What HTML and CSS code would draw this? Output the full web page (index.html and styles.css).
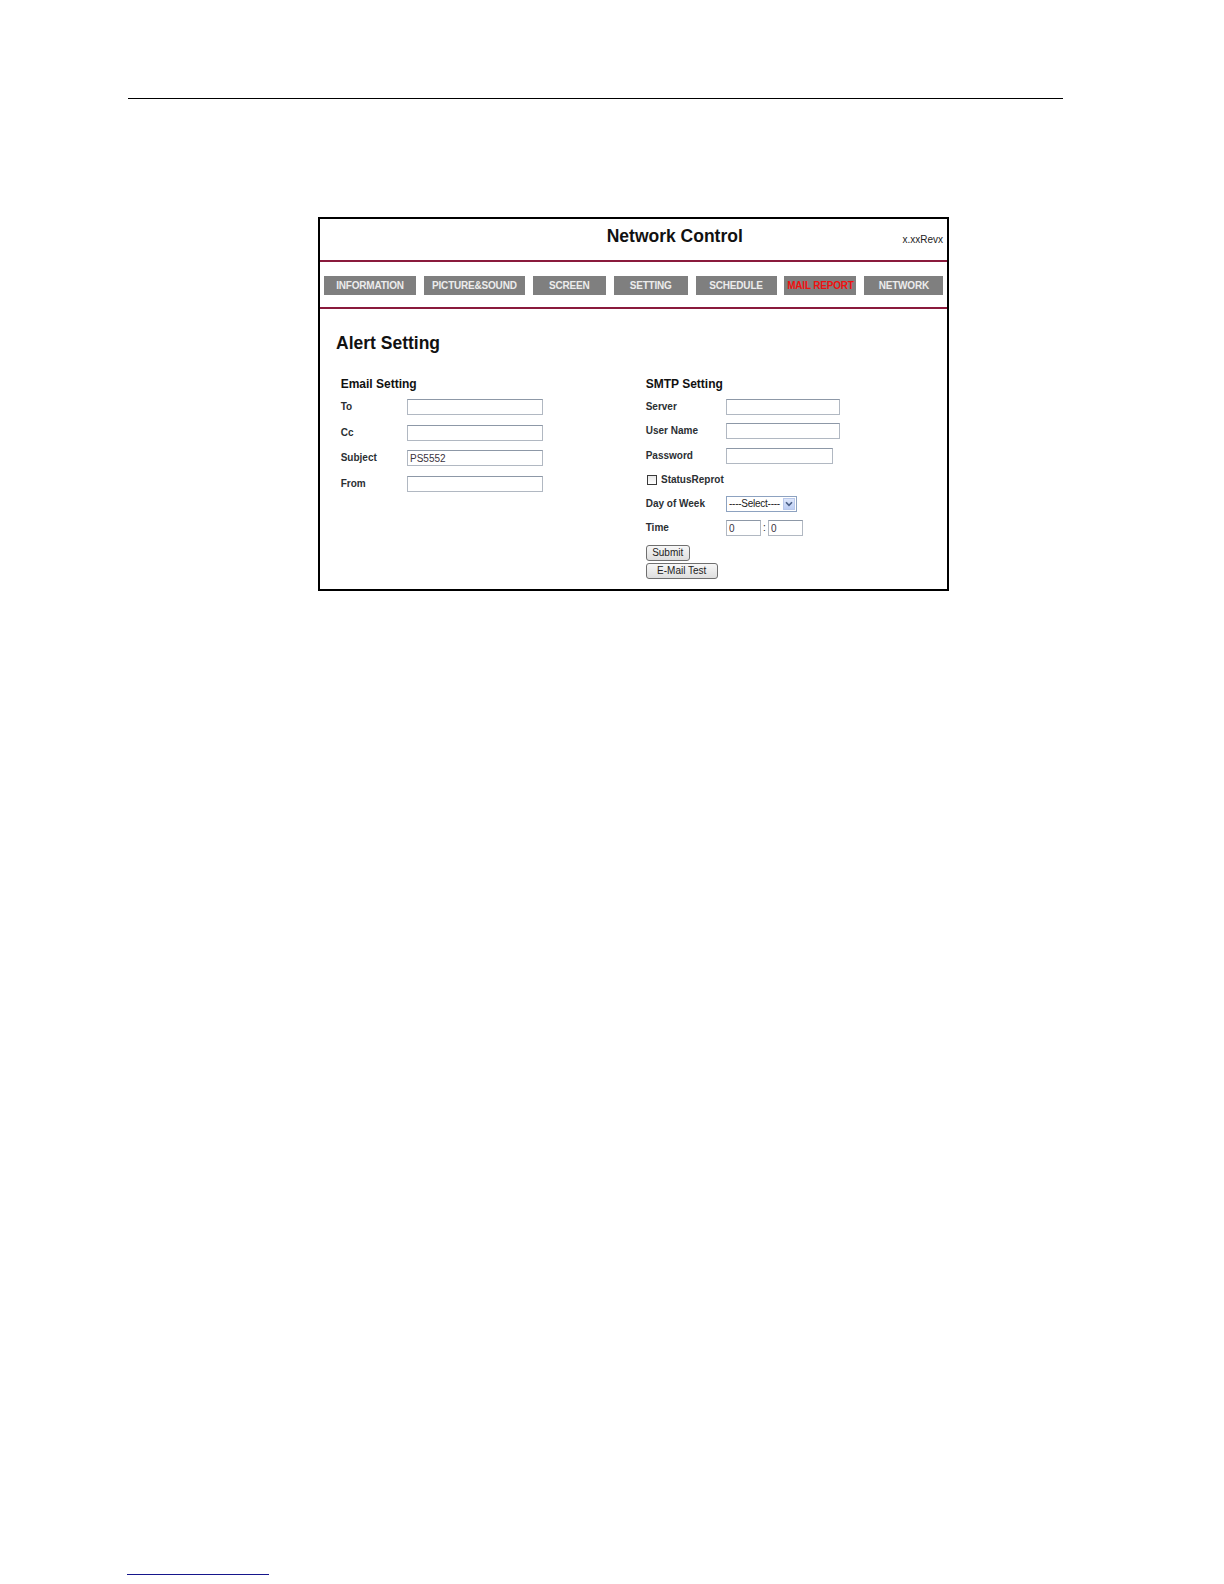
FILE: index.html
```html
<!DOCTYPE html>
<html lang="en">
<head>
<meta charset="utf-8">
<title>Network Control - Alert Setting</title>
<link rel="stylesheet" href="styles.css">
</head>
<body>
<div class="page">
  <div class="top-rule"></div>

  <div class="shot">
    <header class="hdr">
      <h1 class="title">Network Control</h1>
      <span class="rev">x.xxRevx</span>
    </header>

    <nav class="tabs">
      <span class="tab w-info">INFORMATION</span>
      <span class="tab w-pic">PICTURE&amp;SOUND</span>
      <span class="tab w-screen">SCREEN</span>
      <span class="tab w-setting">SETTING</span>
      <span class="tab w-sched">SCHEDULE</span>
      <span class="tab w-mail active">MAIL REPORT</span>
      <span class="tab w-net">NETWORK</span>
    </nav>

    <main class="content">
      <h2 class="page-title">Alert Setting</h2>
      <div class="cols">
        <section class="col col-left">
          <h3 class="sec-title">Email Setting</h3>
          <div class="form form-left">
            <div class="row"><label class="lbl lbl-left">To</label><input class="txt w-left" type="text"></div>
            <div class="row"><label class="lbl lbl-left">Cc</label><input class="txt w-left" type="text"></div>
            <div class="row"><label class="lbl lbl-left">Subject</label><input class="txt w-left" type="text" value="PS5552"></div>
            <div class="row"><label class="lbl lbl-left">From</label><input class="txt w-left" type="text"></div>
          </div>
        </section>

        <section class="col col-right">
          <h3 class="sec-title">SMTP Setting</h3>
          <div class="form form-right">
            <div class="row"><label class="lbl lbl-right">Server</label><input class="txt w-server" type="text"></div>
            <div class="row"><label class="lbl lbl-right">User Name</label><input class="txt w-server" type="text"></div>
            <div class="row"><label class="lbl lbl-right">Password</label><input class="txt w-pass" type="password"></div>
            <div class="row"><span class="chk"></span><span class="lbl chk-lbl">StatusReprot</span></div>
            <div class="row"><label class="lbl lbl-right">Day of Week</label>
              <span class="select"><span class="sel-text">----Select----</span><span class="sel-arrow"><svg width="8" height="6" viewBox="0 0 8 6"><path d="M1 1.2 L4 4.4 L7 1.2" fill="none" stroke="#4a5f86" stroke-width="1.6"/></svg></span></span>
            </div>
            <div class="row"><label class="lbl lbl-right">Time</label><input class="txt w-time" type="text" value="0"><span class="colon">:</span><input class="txt w-time" type="text" value="0"></div>
            <div class="btns">
              <button class="btn w-submit" type="button">Submit</button>
              <button class="btn w-test" type="button">E-Mail Test</button>
            </div>
          </div>
        </section>
      </div>
    </main>
  </div>

  <div class="foot-rule"></div>
</div>
</body>
</html>
```

FILE: styles.css
```css
* { box-sizing: border-box; }

html, body {
  margin: 0;
  padding: 0;
  background: #ffffff;
}

body {
  font-family: "Liberation Sans", Arial, sans-serif;
  color: #222;
}

.page {
  width: 1224px;
  height: 1584px;
  padding-top: 98px;
}

.top-rule {
  margin-left: 128px;
  width: 935px;
  height: 0;
  border-top: 1px solid #000;
}

.shot {
  margin-top: 118px;
  margin-left: 318px;
  width: 631px;
  height: 374px;
  border: 2px solid #000;
  display: flex;
  flex-direction: column;
}

.hdr {
  height: 43px;
  border-bottom: 2px solid #8a1a3c;
  display: flex;
  align-items: flex-start;
  padding: 6.5px 4px 0 286.7px;
}

.title {
  margin: 0;
  font-size: 17.5px;
  line-height: 20px;
  font-weight: bold;
  color: #111;
}

.rev {
  margin-left: auto;
  margin-top: 8.3px;
  font-size: 10px;
  line-height: 12px;
  color: #222;
}

.tabs {
  height: 47px;
  border-bottom: 2px solid #8a1a3c;
  display: flex;
  gap: 7.9px;
  padding: 14px 0 0 4px;
}

.tab {
  height: 19px;
  background: #7f7f7f;
  color: #ececec;
  font-size: 10px;
  font-weight: bold;
  letter-spacing: -0.2px;
  line-height: 19px;
  text-align: center;
  white-space: nowrap;
}

.tab.active { color: #f01010; }

.w-info { width: 92px; }
.w-pic { width: 101px; }
.w-screen { width: 73px; }
.w-setting { width: 74px; }
.w-sched { width: 81px; }
.w-mail { width: 72px; }
.w-net { width: 79px; }

.content {
  padding: 24.2px 0 0 16px;
}

.page-title {
  margin: 0;
  font-size: 17.5px;
  line-height: 20px;
  font-weight: bold;
  color: #111;
}

.cols {
  display: flex;
  margin-top: 23.5px;
  padding-left: 4.7px;
}

.col-left { width: 305px; }
.col-right { flex: 1; }

.sec-title {
  margin: 0 0 8.3px 0;
  font-size: 12px;
  line-height: 14px;
  font-weight: bold;
  color: #111;
}

.form {
  display: flex;
  flex-direction: column;
}

.form-left { gap: 9.6px; }
.form-right { gap: 8.3px; }

.row {
  height: 16px;
  display: flex;
  align-items: center;
}

.lbl {
  font-size: 10px;
  font-weight: bold;
  color: #2b2f33;
  line-height: 12px;
  white-space: nowrap;
}

.lbl-left { width: 66.3px; flex: none; }
.lbl-right { width: 80.3px; flex: none; }

.txt {
  height: 16px;
  margin: 0;
  padding: 0 2px;
  border: 1px solid #b1b8c2;
  border-top-color: #8d98a7;
  background: #fff;
  font-family: "Liberation Sans", Arial, sans-serif;
  font-size: 10px;
  color: #3a3340;
  outline: none;
}

.w-left { width: 136px; }
.w-server { width: 114px; }
.w-pass { width: 107px; }
.w-time { width: 35px; }

.colon {
  width: 7px;
  text-align: center;
  font-size: 10px;
  line-height: 12px;
  color: #222;
}

.chk {
  width: 10px;
  height: 10px;
  margin-left: 1.6px;
  border: 1px solid #3a3a3a;
  background: linear-gradient(#e8e8e8, #ffffff);
}

.chk-lbl { margin-left: 3.7px; }

.select {
  width: 71px;
  height: 16px;
  border: 1px solid #8da2c0;
  display: flex;
  align-items: stretch;
  background: #fff;
}

.sel-text {
  flex: 1;
  min-width: 0;
  overflow: hidden;
  white-space: nowrap;
  font-size: 10px;
  letter-spacing: -0.25px;
  line-height: 14px;
  padding-left: 2px;
  color: #222;
}

.sel-arrow {
  flex: none;
  width: 12px;
  margin: 1px;
  background: linear-gradient(#dde6fb, #bccdf3);
  border: 1px solid #b9c8ea;
  display: flex;
  align-items: center;
  justify-content: center;
}

.btns {
  display: flex;
  flex-direction: column;
  gap: 2px;
  align-items: flex-start;
}

.btn {
  height: 16px;
  margin: 0;
  padding: 0;
  border: 1px solid #6f6f6f;
  border-radius: 3px;
  background: linear-gradient(#f7f7f7, #dedede);
  font-family: "Liberation Sans", Arial, sans-serif;
  font-size: 10px;
  line-height: 14px;
  color: #222;
  text-align: center;
}

.w-submit { width: 44px; }
.w-test { width: 72px; }

.foot-rule {
  margin-top: 983px;
  margin-left: 127px;
  width: 142px;
  height: 0;
  border-top: 1px solid #16168c;
}
```
